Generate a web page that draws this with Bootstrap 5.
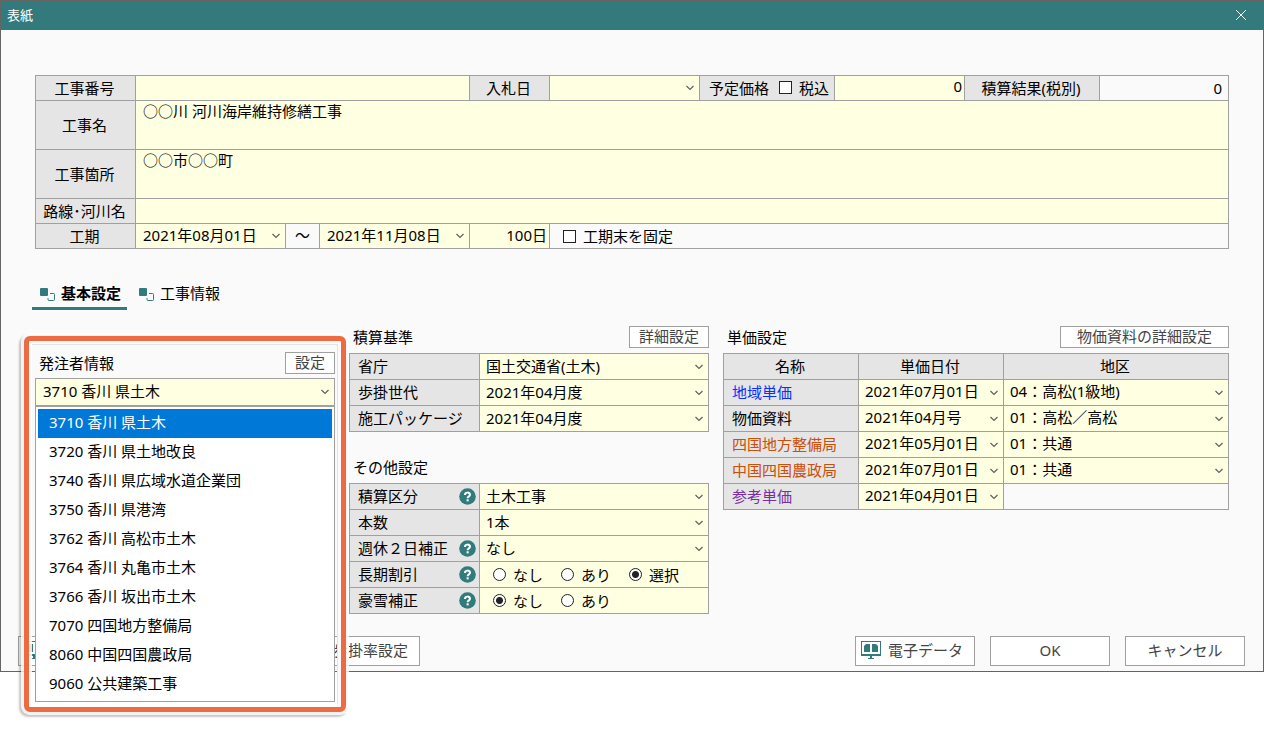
<!DOCTYPE html>
<html lang="ja">
<head>
<meta charset="utf-8">
<meta name="viewport" content="width=device-width, initial-scale=1">
<title>表紙</title>
<link rel="stylesheet" href="https://cdn.jsdelivr.net/npm/bootstrap@5.3.0/dist/css/bootstrap.min.css">
<script src="https://cdn.jsdelivr.net/npm/bootstrap@5.3.0/dist/js/bootstrap.bundle.min.js"></script>
<style>
  :root { --teal: #327a7c; --line: #a0a0a0; --head: #e5e5e5; --field: #ffffe1; --pane: #fafafa; }
  body { font: 15px/22px "Noto Sans", "Noto Sans CJK JP", sans-serif; color: #000; background: #fff; min-height: 100vh; }
  button, input, select, textarea { font: inherit; color: inherit; }
  .dialog-win { border: 1px solid #646464; background: var(--pane); min-width: 1100px; }
  .title-bar { height: 29px; background: var(--teal); color: #fff; font-size: 13px; padding: 0 16px 2px 6px; }
  .close-x { background: none; border: 0; padding: 0; line-height: 0; color: #fff; }
  .content-pad { padding: 45px 34px 0; }

  /* bordered form grids */
  .sheet { border: 1px solid var(--line); }
  .sheet-row { display: flex; height: 25px; border-bottom: 1px solid var(--line); }
  .sheet-row.tall { height: 49px; }
  .sheet-row:last-child { border-bottom: 0; height: 24px; }
  .sheet-row > * { border-right: 1px solid var(--line); flex: none; }
  .sheet-row > :last-child { border-right: 0; }
  .sheet-row > .grow { flex: 1 1 0; min-width: 0; }
  .cap { background: var(--head); display: flex; align-items: center; justify-content: center; padding: 0 2px 1px 0; }
  .w34 { width: 34px; } .w80 { width: 80px; } .w100 { width: 100px; } .w128 { width: 128px; }
  .w130 { width: 130px; } .w135 { width: 135px; } .w150 { width: 150px; }
  .fld { display: block; width: 100%; height: 100%; border: 0; border-radius: 0; outline: 0; margin: 0; padding: 0 6px 2px; background-color: var(--field); appearance: none; resize: none; overflow: hidden; }
  .main-sheet .fld, .owner-box .fld { padding-left: 7px; }
  .main-sheet textarea.fld { line-height: 20px; }
  select.fld { padding-right: 18px; background-repeat: no-repeat; background-position: right 5px center;
    background-image: url("data:image/svg+xml,%3Csvg xmlns='http://www.w3.org/2000/svg' width='8' height='6' viewBox='0 0 8 6'%3E%3Cpath d='M.5 1 4 4.500 7.500 1' fill='none' stroke='%23606060' stroke-width='1.200'/%3E%3C/svg%3E"); }
  input.fld.num { text-align: right; padding-right: 2px; padding-bottom: 4px; }
  input.fld.out { padding-right: 6px; padding-bottom: 0; background-color: var(--pane); }
  .tick, .dot { appearance: none; flex: none; width: 13px; height: 13px; margin: 0; border: 1px solid #222; background: #fff; }
  .tick:checked { background: #222; }
  .dot { border-radius: 50%; }
  .dot:checked { background: radial-gradient(circle, #222 0 3px, #fff 4px); }
  .opt { display: flex; align-items: center; gap: 7px; }
  .plan-cap { gap: 10px; padding-left: 6px; }
  .fix-cell { display: flex; align-items: center; padding-left: 13px; }

  .tab-strip { margin: 34px 0 0 -3px; }
  .tab-btn { display: flex; align-items: center; gap: 6px; height: 27px; padding: 0 6px 4px 8px; border: 0; border-bottom: 3px solid transparent; background: none; }
  .tab-btn svg { margin-top: 2px; }
  .tab-btn.active { font-weight: 700; border-color: var(--teal); }

  .panes { display: flex; gap: 14px; margin-top: 16px; align-items: flex-start; }
  .pane-a { flex: 0 0 300px; margin-top: 26px; }
  .pane-b { flex: 0 0 360px; }
  .pane-c { flex: 1 1 0; min-width: 0; }
  .pane-head { display: flex; align-items: center; justify-content: space-between; height: 22px; margin-bottom: 5px; padding-left: 4px; }
  .pane-head.second { margin-top: 24px; }
  .pane-a .pane-head { margin-bottom: 4px; }
  .flat-btn { display: flex; align-items: center; justify-content: center; height: 22px; padding: 0 9px 2px; border: 1px solid var(--line); background: #fff; color: #444; line-height: 20px; }
  .foot-btn { height: 30px; width: 120px; padding: 0 5px 2px; gap: 7px; }
  .foot-btn.wide { width: 267px; }
  .opts .sheet-row { height: 26px; }
  .opts .sheet-row:last-child { height: 25px; }
  .opts .cap { justify-content: space-between; padding: 0 3px 1px 8px; }
  .radios { background: var(--field); display: flex; align-items: center; gap: 18px; padding-left: 13px; }

  .price { width: 100%; table-layout: fixed; border-collapse: collapse; }
  .price th, .price td { height: 26px; padding: 0; border: 1px solid var(--line); font-weight: 400; }
  .price th { background: var(--head); text-align: center; padding: 0 2px 2px 0; }
  .price tbody th { text-align: left; padding-left: 8px; }
  .price .fld { height: 25px; padding-bottom: 3px; }
  .c-blue { color: #0a2fff; } .c-rust { color: #c94f0a; } .c-plum { color: #7a2fa0; }

  /* open list and the frame round it */
  .over { position: relative; z-index: 5; }
  .owner-box { height: 28px; border: 1px solid var(--line); }
  .owner-list { position: absolute; top: 100%; left: 0; right: 0; margin: 0; padding: 2px; border: 1px solid var(--line); background: #fff; list-style: none; z-index: 7; }
  .owner-list button { display: block; width: 100%; height: 29px; padding: 0 11px 3px; border: 0; background: none; text-align: left; }
  .owner-list .picked { background: #0078d7; color: #fff; }
  .ring { position: absolute; z-index: 6; top: -16px; left: -11px; right: -11px; bottom: -306px; border: 5px solid #ee6a40; border-radius: 6px; pointer-events: none;
    box-shadow: 0 0 0 3px rgba(255,255,255,.8), inset 0 0 0 3px rgba(255,255,255,.85), inset -4px 4px 0 0 #e4e4e6, -2px 2px 2px 3px rgba(0,0,0,.22); }
  .foot { padding: 0 18px 5px 17px; margin-top: 22px; gap: 15px; }
</style>
</head>
<body>
<main class="dialog-win">
  <header class="title-bar d-flex align-items-center justify-content-between">
    <span>表紙</span>
    <button class="close-x" type="button" aria-label="閉じる"><svg width="12" height="12" viewBox="0 0 12 12"><path d="M1 1 11 11M11 1 1 11" stroke="currentColor" fill="none"/></svg></button>
  </header>

  <form>
  <div class="content-pad">
    <div class="sheet main-sheet">
      <div class="sheet-row">
        <label class="cap w100" for="no">工事番号</label>
        <div class="grow"><input class="fld" id="no" type="text"></div>
        <label class="cap w80" for="bid">入札日</label>
        <div class="w150"><select class="fld" id="bid"><option></option></select></div>
        <div class="cap w135 plan-cap"><label for="plan">予定価格</label><label class="opt"><input class="tick" type="checkbox">税込</label></div>
        <div class="w130"><input class="fld num" id="plan" type="text" value="0"></div>
        <label class="cap w135" for="res">積算結果(税別)</label>
        <div class="w128"><input class="fld num out" id="res" type="text" value="0" readonly></div>
      </div>
      <div class="sheet-row tall">
        <label class="cap w100" for="name">工事名</label>
        <div class="grow"><textarea class="fld" id="name">○○川 河川海岸維持修繕工事</textarea></div>
      </div>
      <div class="sheet-row tall">
        <label class="cap w100" for="site">工事箇所</label>
        <div class="grow"><textarea class="fld" id="site">○○市○○町</textarea></div>
      </div>
      <div class="sheet-row">
        <label class="cap w100" for="river">路線･河川名</label>
        <div class="grow"><input class="fld" id="river" type="text"></div>
      </div>
      <div class="sheet-row">
        <label class="cap w100" for="from">工期</label>
        <div class="w150"><select class="fld" id="from"><option>2021年08月01日</option></select></div>
        <div class="w34 text-center">～</div>
        <div class="w150"><select class="fld" aria-label="工期終了日"><option>2021年11月08日</option></select></div>
        <div class="w80"><input class="fld num" type="text" value="100日" aria-label="日数"></div>
        <div class="grow fix-cell"><label class="opt"><input class="tick" type="checkbox">工期末を固定</label></div>
      </div>
    </div>

    <div class="tab-strip d-flex gap-1" role="tablist">
      <button class="tab-btn active" type="button" role="tab" aria-selected="true"><svg width="15" height="13" viewBox="0 0 15 13"><use href="#tabmark"/></svg>基本設定</button>
      <button class="tab-btn" type="button" role="tab" aria-selected="false"><svg width="15" height="13" viewBox="0 0 15 13"><use href="#tabmark"/></svg>工事情報</button>
    </div>

    <div class="panes">
      <section class="pane-a over">
        <div class="pane-head"><label for="owner">発注者情報</label><button class="flat-btn" type="button">設定</button></div>
        <div class="owner-box"><select class="fld" id="owner"><option>3710 香川 県土木</option></select></div>
        <div class="ring"></div>
        <ul class="owner-list">
          <li><button type="button" class="picked">3710 香川 県土木</button></li>
          <li><button type="button">3720 香川 県土地改良</button></li>
          <li><button type="button">3740 香川 県広域水道企業団</button></li>
          <li><button type="button">3750 香川 県港湾</button></li>
          <li><button type="button">3762 香川 高松市土木</button></li>
          <li><button type="button">3764 香川 丸亀市土木</button></li>
          <li><button type="button">3766 香川 坂出市土木</button></li>
          <li><button type="button">7070 四国地方整備局</button></li>
          <li><button type="button">8060 中国四国農政局</button></li>
          <li><button type="button">9060 公共建築工事</button></li>
        </ul>
      </section>

      <section class="pane-b">
        <div class="pane-head"><span>積算基準</span><button class="flat-btn" type="button">詳細設定</button></div>
        <div class="sheet opts">
          <div class="sheet-row"><label class="cap w130" for="min">省庁</label><div class="grow"><select class="fld" id="min"><option>国土交通省(土木)</option></select></div></div>
          <div class="sheet-row"><label class="cap w130" for="gen">歩掛世代</label><div class="grow"><select class="fld" id="gen"><option>2021年04月度</option></select></div></div>
          <div class="sheet-row"><label class="cap w130" for="pkg">施工パッケージ</label><div class="grow"><select class="fld" id="pkg"><option>2021年04月度</option></select></div></div>
        </div>
        <div class="pane-head second">その他設定</div>
        <div class="sheet opts">
          <div class="sheet-row"><div class="cap w130"><label for="kind">積算区分</label><svg width="17" height="17" viewBox="0 0 17 17"><use href="#help"/></svg></div><div class="grow"><select class="fld" id="kind"><option>土木工事</option></select></div></div>
          <div class="sheet-row"><label class="cap w130" for="cnt">本数</label><div class="grow"><select class="fld" id="cnt"><option>1本</option></select></div></div>
          <div class="sheet-row"><div class="cap w130"><label for="week">週休２日補正</label><svg width="17" height="17" viewBox="0 0 17 17"><use href="#help"/></svg></div><div class="grow"><select class="fld" id="week"><option>なし</option></select></div></div>
          <div class="sheet-row"><div class="cap w130"><span>長期割引</span><svg width="17" height="17" viewBox="0 0 17 17"><use href="#help"/></svg></div>
            <div class="grow radios"><label class="opt"><input class="dot" type="radio" name="long">なし</label><label class="opt"><input class="dot" type="radio" name="long">あり</label><label class="opt"><input class="dot" type="radio" name="long" checked>選択</label></div></div>
          <div class="sheet-row"><div class="cap w130"><span>豪雪補正</span><svg width="17" height="17" viewBox="0 0 17 17"><use href="#help"/></svg></div>
            <div class="grow radios"><label class="opt"><input class="dot" type="radio" name="snow" checked>なし</label><label class="opt"><input class="dot" type="radio" name="snow">あり</label></div></div>
        </div>
      </section>

      <section class="pane-c">
        <div class="pane-head"><span>単価設定</span><button class="flat-btn px-3" type="button">物価資料の詳細設定</button></div>
        <table class="price">
          <colgroup><col style="width:135px"><col style="width:145px"><col></colgroup>
          <thead><tr><th scope="col">名称</th><th scope="col">単価日付</th><th scope="col">地区</th></tr></thead>
          <tbody>
            <tr><th scope="row" class="c-blue">地域単価</th><td><select class="fld" aria-label="地域単価 日付"><option>2021年07月01日</option></select></td><td><select class="fld" aria-label="地域単価 地区"><option>04：高松(1級地)</option></select></td></tr>
            <tr><th scope="row">物価資料</th><td><select class="fld" aria-label="物価資料 日付"><option>2021年04月号</option></select></td><td><select class="fld" aria-label="物価資料 地区"><option>01：高松／高松</option></select></td></tr>
            <tr><th scope="row" class="c-rust">四国地方整備局</th><td><select class="fld" aria-label="四国地方整備局 日付"><option>2021年05月01日</option></select></td><td><select class="fld" aria-label="四国地方整備局 地区"><option>01：共通</option></select></td></tr>
            <tr><th scope="row" class="c-rust">中国四国農政局</th><td><select class="fld" aria-label="中国四国農政局 日付"><option>2021年07月01日</option></select></td><td><select class="fld" aria-label="中国四国農政局 地区"><option>01：共通</option></select></td></tr>
            <tr><th scope="row" class="c-plum">参考単価</th><td><select class="fld" aria-label="参考単価 日付"><option>2021年04月01日</option></select></td><td></td></tr>
          </tbody>
        </table>
      </section>
    </div>
  </div>

  <footer class="foot d-flex">
    <button class="flat-btn foot-btn wide justify-content-start" type="button" aria-label="データ"><svg width="20" height="18" viewBox="0 0 20 18"><use href="#monitor"/></svg></button>
    <button class="flat-btn foot-btn justify-content-start" type="button"><svg width="20" height="18" viewBox="0 0 20 18"><use href="#monitor"/></svg>歩掛率設定</button>
    <button class="flat-btn foot-btn justify-content-start ms-auto" type="button"><svg width="20" height="18" viewBox="0 0 20 18"><use href="#monitor"/></svg>電子データ</button>
    <button class="flat-btn foot-btn" type="submit">OK</button>
    <button class="flat-btn foot-btn" type="button">キャンセル</button>
  </footer>
  </form>
</main>

<svg width="0" height="0" class="position-absolute" aria-hidden="true">
  <symbol id="tabmark" viewBox="0 0 15 13"><rect width="8" height="8" rx="1" fill="#327a7c"/><path d="M10 5.500h3.500a1 1 0 0 1 1 1v5a1 1 0 0 1-1 1h-4.500a1 1 0 0 1-1-1V10" fill="none" stroke="#327a7c"/></symbol>
  <symbol id="help" viewBox="0 0 17 17"><circle cx="8.500" cy="8.500" r="8.300" fill="#327a7c"/><path d="M6 6.900C6 3.900 11 3.900 11 6.700 11 8.400 8.600 8.300 8.600 10.300" fill="none" stroke="#fff" stroke-width="2"/><rect x="7.600" y="11.300" width="2.100" height="2.100" fill="#fff"/></symbol>
  <symbol id="monitor" viewBox="0 0 20 18"><path fill="#327a7c" fill-rule="evenodd" d="M0 0H20V15H0ZM1 1V13H19V1Z"/><path fill="#327a7c" d="M5 3H9V11H3V5ZM11 3H15L17 5V11H11ZM9 15H11V17H13V18H7V17H9Z"/></symbol>
</svg>
</body>
</html>
